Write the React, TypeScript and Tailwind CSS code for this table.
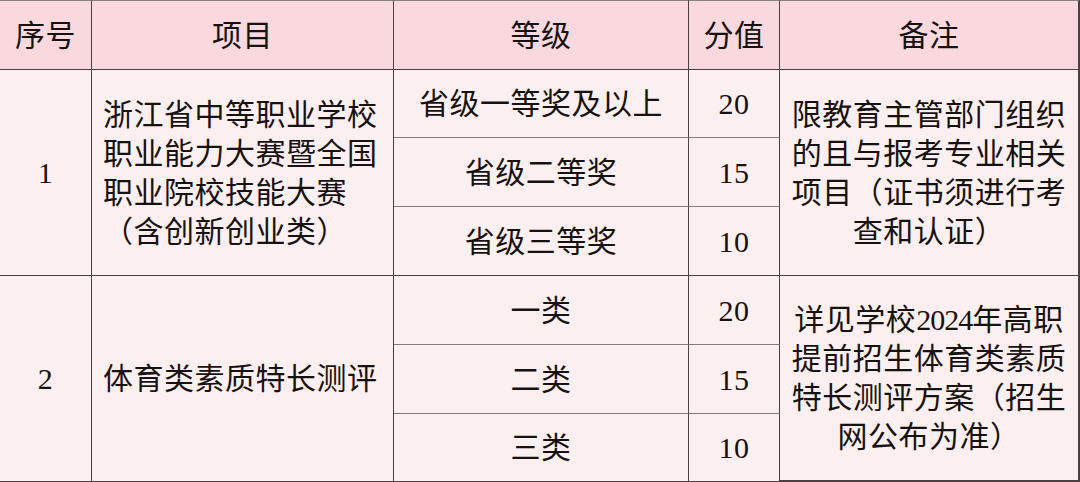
const rows = [
  {
    no: "1",
    item: ["浙江省中等职业学校", "职业能力大赛暨全国", "职业院校技能大赛", "（含创新创业类）"],
    grades: [
      ["省级一等奖及以上", "20"],
      ["省级二等奖", "15"],
      ["省级三等奖", "10"],
    ],
    note: ["限教育主管部门组织", "的且与报考专业相关", "项目（证书须进行考", "查和认证）"],
  },
  {
    no: "2",
    item: ["体育类素质特长测评"],
    grades: [
      ["一类", "20"],
      ["二类", "15"],
      ["三类", "10"],
    ],
    note: ["详见学校2024年高职", "提前招生体育类素质", "特长测评方案（招生", "网公布为准）"],
  },
]

const head = ["序号", "项目", "等级", "分值", "备注"]

function Lines({ lines }: { lines: string[] }) {
  return (
    <>
      {lines.map((l) => (
        <div key={l} className="whitespace-nowrap">
          {l.includes("2024") ? (
            <>
              {l.split("2024")[0]}
              <span className="tracking-[-1px]">2024</span>
              {l.split("2024")[1]}
            </>
          ) : (
            l
          )}
        </div>
      ))}
    </>
  )
}

export default function App() {
  return (
    <div className="w-[1080px] h-[482px] overflow-hidden bg-[#fcefef] font-['Liberation_Serif','Noto_Sans_CJK_SC',serif] text-[30px] leading-[39px] tracking-[0.5px] text-[#161212]">
      <div className="grid grid-cols-[92px_302px_295px_91px_300px] grid-rows-[70px_68px_69px_69px_69px_69px_68px]">
        {/* 表头 */}
        {head.map((h, i) => (
          <div
            key={h}
            className={
              i === 4
                ? "flex items-center justify-center border-t border-r-2 border-b border-t-[#8a8080] border-[#4a4040] bg-[#f9d9de]"
                : "flex items-center justify-center border-t border-r border-b border-t-[#8a8080] border-[#4a4040] bg-[#f9d9de]"
            }
          >
            {h}
          </div>
        ))}

        {rows.map((r, ri) => (
          <div key={r.no} className="contents">
            <div className="row-span-3 flex items-center justify-center border-r border-b border-[#4a4040]">
              {r.no}
            </div>
            <div className="row-span-3 flex flex-col justify-center pl-[11px] border-r border-b border-[#4a4040]">
              <Lines lines={r.item} />
            </div>
            {r.grades.map(([g, s], i) => (
              <div key={g} className="contents">
                <div
                  className={
                    i === 2
                      ? "flex items-center justify-center border-r border-b border-[#4a4040]"
                      : "flex items-center justify-center border-r border-[#4a4040] border-b border-b-[#857a7a]"
                  }
                >
                  {g}
                </div>
                <div
                  className={
                    i === 2
                      ? "flex items-center justify-center border-r border-b border-[#4a4040]"
                      : "flex items-center justify-center border-r border-[#4a4040] border-b border-b-[#857a7a]"
                  }
                >
                  {s}
                </div>
                {i === 0 && (
                  <div
                    className={
                      ri === 1
                        ? "row-span-3 flex flex-col items-center justify-center border-r-2 border-b-2 border-[#4a4040]"
                        : "row-span-3 flex flex-col items-center justify-center border-r-2 border-b border-[#4a4040]"
                    }
                  >
                    <Lines lines={r.note} />
                  </div>
                )}
              </div>
            ))}
          </div>
        ))}
      </div>
    </div>
  )
}
